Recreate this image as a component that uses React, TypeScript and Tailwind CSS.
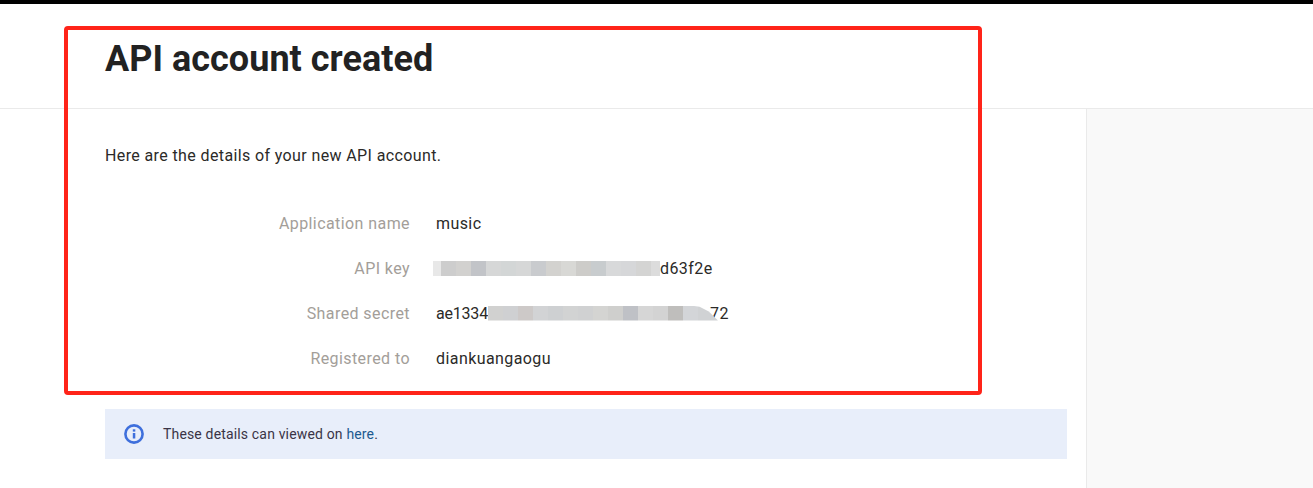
const keyBlocks: [number, string][] = [
  [8, "#e8e8e8"], [15, "#cdcdcd"], [15, "#d2d1cf"], [15, "#c2c4c8"], [15, "#d6d7d7"], [15, "#d3d6d6"], [15, "#d6d7d7"],
  [15, "#c9cbce"], [15, "#d3d2cf"], [15, "#d8d8d5"], [15, "#cdccc9"], [15, "#c8ccce"], [15, "#d8d9da"], [15, "#d6d7d9"], [15, "#d4d4d3"], [9, "#dcdcdc"],
];
const secretBlocks: [number, string][] = [
  [15, "#d1d1d0"], [15, "#cfd0d2"], [15, "#cdc9c8"], [15, "#d2d3d5"], [15, "#ced0d2"], [15, "#d2d3d3"], [15, "#d0d1d2"], [15, "#d4d4d2"],
  [15, "#cfcfcd"], [15, "#bfc1c6"], [15, "#d6d6d6"], [15, "#d3d3d3"], [15, "#bfbebc"], [15, "#d3d5d8"], [20, "#d0d2d4"],
];

function Mosaic({ blocks, className }: { blocks: [number, string][]; className: string }) {
  return (
    <div className={`flex h-[15px] shrink-0 ${className}`}>
      {blocks.map(([w, c], i) => (
        <div key={i} className="h-full" style={{ width: w, backgroundColor: c }} />
      ))}
    </div>
  );
}

function Row({ label, children }: { label: string; children: React.ReactNode }) {
  return (
    <div className="flex h-[45px] items-center tracking-[0.42px]">
      <div className="w-[305px] text-right text-[#a39e99]">{label}</div>
      <div className="ml-[26px] flex items-center text-[#2b2a28]">{children}</div>
    </div>
  );
}

export default function App() {
  return (
    <div className="relative h-[488px] w-[1313px] overflow-hidden bg-white font-['Roboto',sans-serif] text-[16px]">
      <div className="h-1 bg-black" />
      <header className="h-[105px] border-b border-[#eaeaea] pl-[105px] pt-[34px]">
        <h1 className="text-[36px] font-bold leading-[42px] tracking-[0.03px] text-[#222222]">API account created</h1>
      </header>
      <div className="flex h-[379px]">
        <main className="w-[1086px] pl-[105px] pr-[19px]">
          <p className="mt-[36px] text-[16px] leading-[22px] tracking-[0.38px] text-[#2b2a28]">
            Here are the details of your new API account.
          </p>
          <div className="mt-[34px]">
            <Row label="Application name">music</Row>
            <Row label="API key">
              <Mosaic blocks={keyBlocks} className="-ml-[3px] -mt-[1px]" />
              <span>d63f2e</span>
            </Row>
            <Row label="Shared secret">
              <span className="tracking-[-0.2px]">ae1334</span>
              <Mosaic
                blocks={secretBlocks}
                className="relative z-10 -mt-[1px] [clip-path:polygon(0_0,88%_0,92%_8%,96%_40%,100%_100%,0_100%)]"
              />
              <span className="-ml-[8px]">72</span>
            </Row>
            <Row label="Registered to">diankuangaogu</Row>
          </div>
          <div className="mt-[28px] flex h-[50px] items-center bg-[#e8eefa] pl-[19px] text-[14px] tracking-[0.16px] text-[#3a3446]">
            <svg width="20" height="20" viewBox="0 0 20 20" fill="none" className="shrink-0">
              <circle cx="10" cy="10" r="8.6" stroke="#3e6fdc" strokeWidth="2.6" />
              <rect x="8.8" y="9" width="2.5" height="5.5" fill="#3e6fdc" />
              <rect x="8.8" y="5.3" width="2.5" height="2.3" fill="#3e6fdc" />
            </svg>
            <span className="ml-[19px]">
              These details can viewed on <span className="text-[#1d5a8f]">here</span>.
            </span>
          </div>
        </main>
        <aside className="flex-1 border-l border-[#eaeaea] bg-[#f9f9f9]" />
      </div>
      <div className="pointer-events-none absolute left-[64px] top-[26px] h-[369px] w-[918px] rounded-[4px] border-[4px] border-[#ff2419]" />
    </div>
  );
}
